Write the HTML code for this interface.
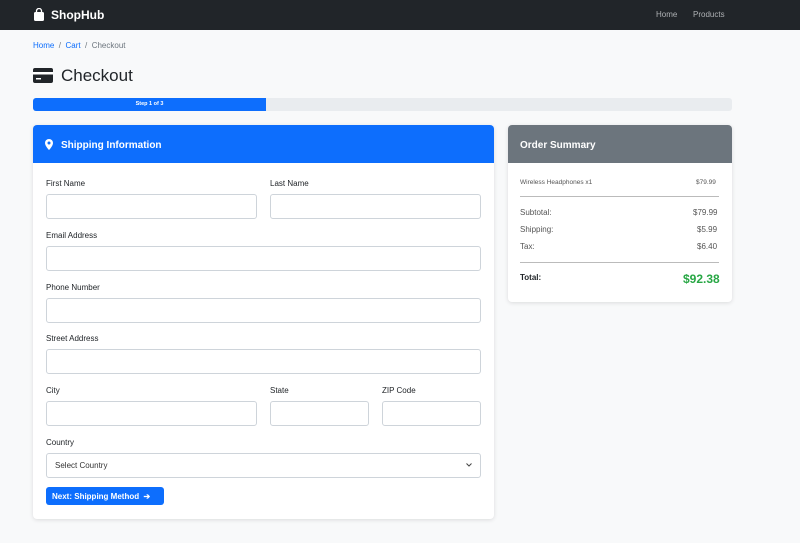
<!DOCTYPE html>
<html><head><meta charset="utf-8"><style>
*{box-sizing:border-box;margin:0;padding:0}
body{width:800px;height:543px;background:#f8f9fa;font-family:"Liberation Sans",sans-serif;position:relative;overflow:hidden;color:#212529}
.a{position:absolute;white-space:nowrap}
.nav{left:0;top:0;width:800px;height:30px;background:#212529}
.lbl{font-size:8px;color:#212529}
.inp{background:#fff;border:1px solid #ced4da;border-radius:3px;height:25px}
.card{background:#fff;border-radius:4px;box-shadow:0 1px 4px rgba(0,0,0,.12)}
.s{font-size:8px;color:#555}
</style></head><body>
<div class="a nav"></div>
<svg class="a" style="left:33px;top:8px" width="12" height="13" viewBox="0 0 12 13"><path d="M3.5 4V3a2.5 2.5 0 0 1 5 0v1" fill="none" stroke="#fff" stroke-width="1.3"/><rect x="1" y="4" width="10" height="9" rx="1.5" fill="#fff"/></svg>
<div class="a" style="left:51px;top:8px;font-size:12px;font-weight:bold;color:#fff">ShopHub</div>
<div class="a" style="left:656px;top:10px;font-size:8px;color:#aeb1b4">Home</div>
<div class="a" style="left:693px;top:10px;font-size:8px;color:#aeb1b4">Products</div>

<div class="a" style="left:33px;top:41px;font-size:8px;color:#6c757d"><span style="color:#0d6efd">Home</span> &nbsp;/&nbsp; <span style="color:#0d6efd">Cart</span> &nbsp;/&nbsp; Checkout</div>
<svg class="a" style="left:33px;top:68px" width="20" height="15" viewBox="0 0 20 15"><rect x="0" y="0" width="20" height="15" rx="2" fill="#212529"/><rect x="0" y="4" width="20" height="2.5" fill="#fff"/><rect x="3" y="10" width="5" height="1.5" fill="#fff"/></svg>
<div class="a" style="left:61px;top:66px;font-size:17px;color:#212529">Checkout</div>

<div class="a" style="left:33px;top:98px;width:699px;height:13px;background:#e9ecef;border-radius:3px;overflow:hidden"><div style="width:233px;height:13px;background:#0d6efd;color:#fff;font-size:5.5px;font-weight:bold;text-align:center;line-height:13px">Step 1 of 3</div></div>

<div class="a card" style="left:33px;top:125px;width:461px;height:394px;overflow:hidden">
<div style="height:38px;background:#0d6efd"></div></div>
<svg class="a" style="left:45px;top:139px" width="8" height="11" viewBox="0 0 8 11"><path d="M4 0a4 4 0 0 1 4 4c0 3-4 7-4 7S0 7 0 4a4 4 0 0 1 4-4z" fill="#fff"/><circle cx="4" cy="4" r="1.5" fill="#0d6efd"/></svg>
<div class="a" style="left:61px;top:139px;font-size:10px;font-weight:bold;color:#fff;line-height:13px">Shipping Information</div>

<div class="a lbl" style="left:46px;top:179px">First Name</div>
<div class="a lbl" style="left:270px;top:179px">Last Name</div>
<div class="a inp" style="left:46px;top:194px;width:211px"></div>
<div class="a inp" style="left:270px;top:194px;width:211px"></div>
<div class="a lbl" style="left:46px;top:231px">Email Address</div>
<div class="a inp" style="left:46px;top:246px;width:435px"></div>
<div class="a lbl" style="left:46px;top:283px">Phone Number</div>
<div class="a inp" style="left:46px;top:298px;width:435px"></div>
<div class="a lbl" style="left:46px;top:334px">Street Address</div>
<div class="a inp" style="left:46px;top:349px;width:435px"></div>
<div class="a lbl" style="left:46px;top:386px">City</div>
<div class="a lbl" style="left:270px;top:386px">State</div>
<div class="a lbl" style="left:382px;top:386px">ZIP Code</div>
<div class="a inp" style="left:46px;top:401px;width:211px"></div>
<div class="a inp" style="left:270px;top:401px;width:99px"></div>
<div class="a inp" style="left:382px;top:401px;width:99px"></div>
<div class="a lbl" style="left:46px;top:438px">Country</div>
<div class="a inp" style="left:46px;top:453px;width:435px"></div>
<div class="a" style="left:55px;top:461px;font-size:8px;color:#333">Select Country</div>
<svg class="a" style="left:466px;top:463px" width="6" height="4" viewBox="0 0 6 4"><path d="M0.5 0.5L3 3L5.5 0.5" fill="none" stroke="#444" stroke-width="1"/></svg>
<div class="a" style="left:46px;top:487px;width:118px;height:18px;background:#0d6efd;border-radius:3px;color:#fff;font-size:8px;font-weight:bold;line-height:19px;padding-left:6px">Next: Shipping Method &nbsp;➔</div>

<div class="a card" style="left:508px;top:125px;width:224px;height:177px;overflow:hidden"><div style="height:38px;background:#6c757d"></div></div>
<div class="a" style="left:520px;top:139px;font-size:10px;font-weight:bold;color:#fff;line-height:13px">Order Summary</div>
<div class="a" style="left:520px;top:179px;font-size:6.5px;color:#555">Wireless Headphones x1</div>
<div class="a" style="left:696px;top:179px;font-size:6.5px;color:#555">$79.99</div>
<div class="a" style="left:520px;top:196px;width:199px;height:1px;background:#bbb"></div>
<div class="a s" style="left:520px;top:208px">Subtotal:</div><div class="a s" style="left:693px;top:208px">$79.99</div>
<div class="a s" style="left:520px;top:225px">Shipping:</div><div class="a s" style="left:697px;top:225px">$5.99</div>
<div class="a s" style="left:520px;top:242px">Tax:</div><div class="a s" style="left:697px;top:242px">$6.40</div>
<div class="a" style="left:520px;top:262px;width:199px;height:1px;background:#bbb"></div>
<div class="a" style="left:520px;top:273px;font-size:8px;font-weight:bold">Total:</div>
<div class="a" style="left:683px;top:272px;font-size:12px;font-weight:bold;color:#28a745">$92.38</div>
</body></html>
